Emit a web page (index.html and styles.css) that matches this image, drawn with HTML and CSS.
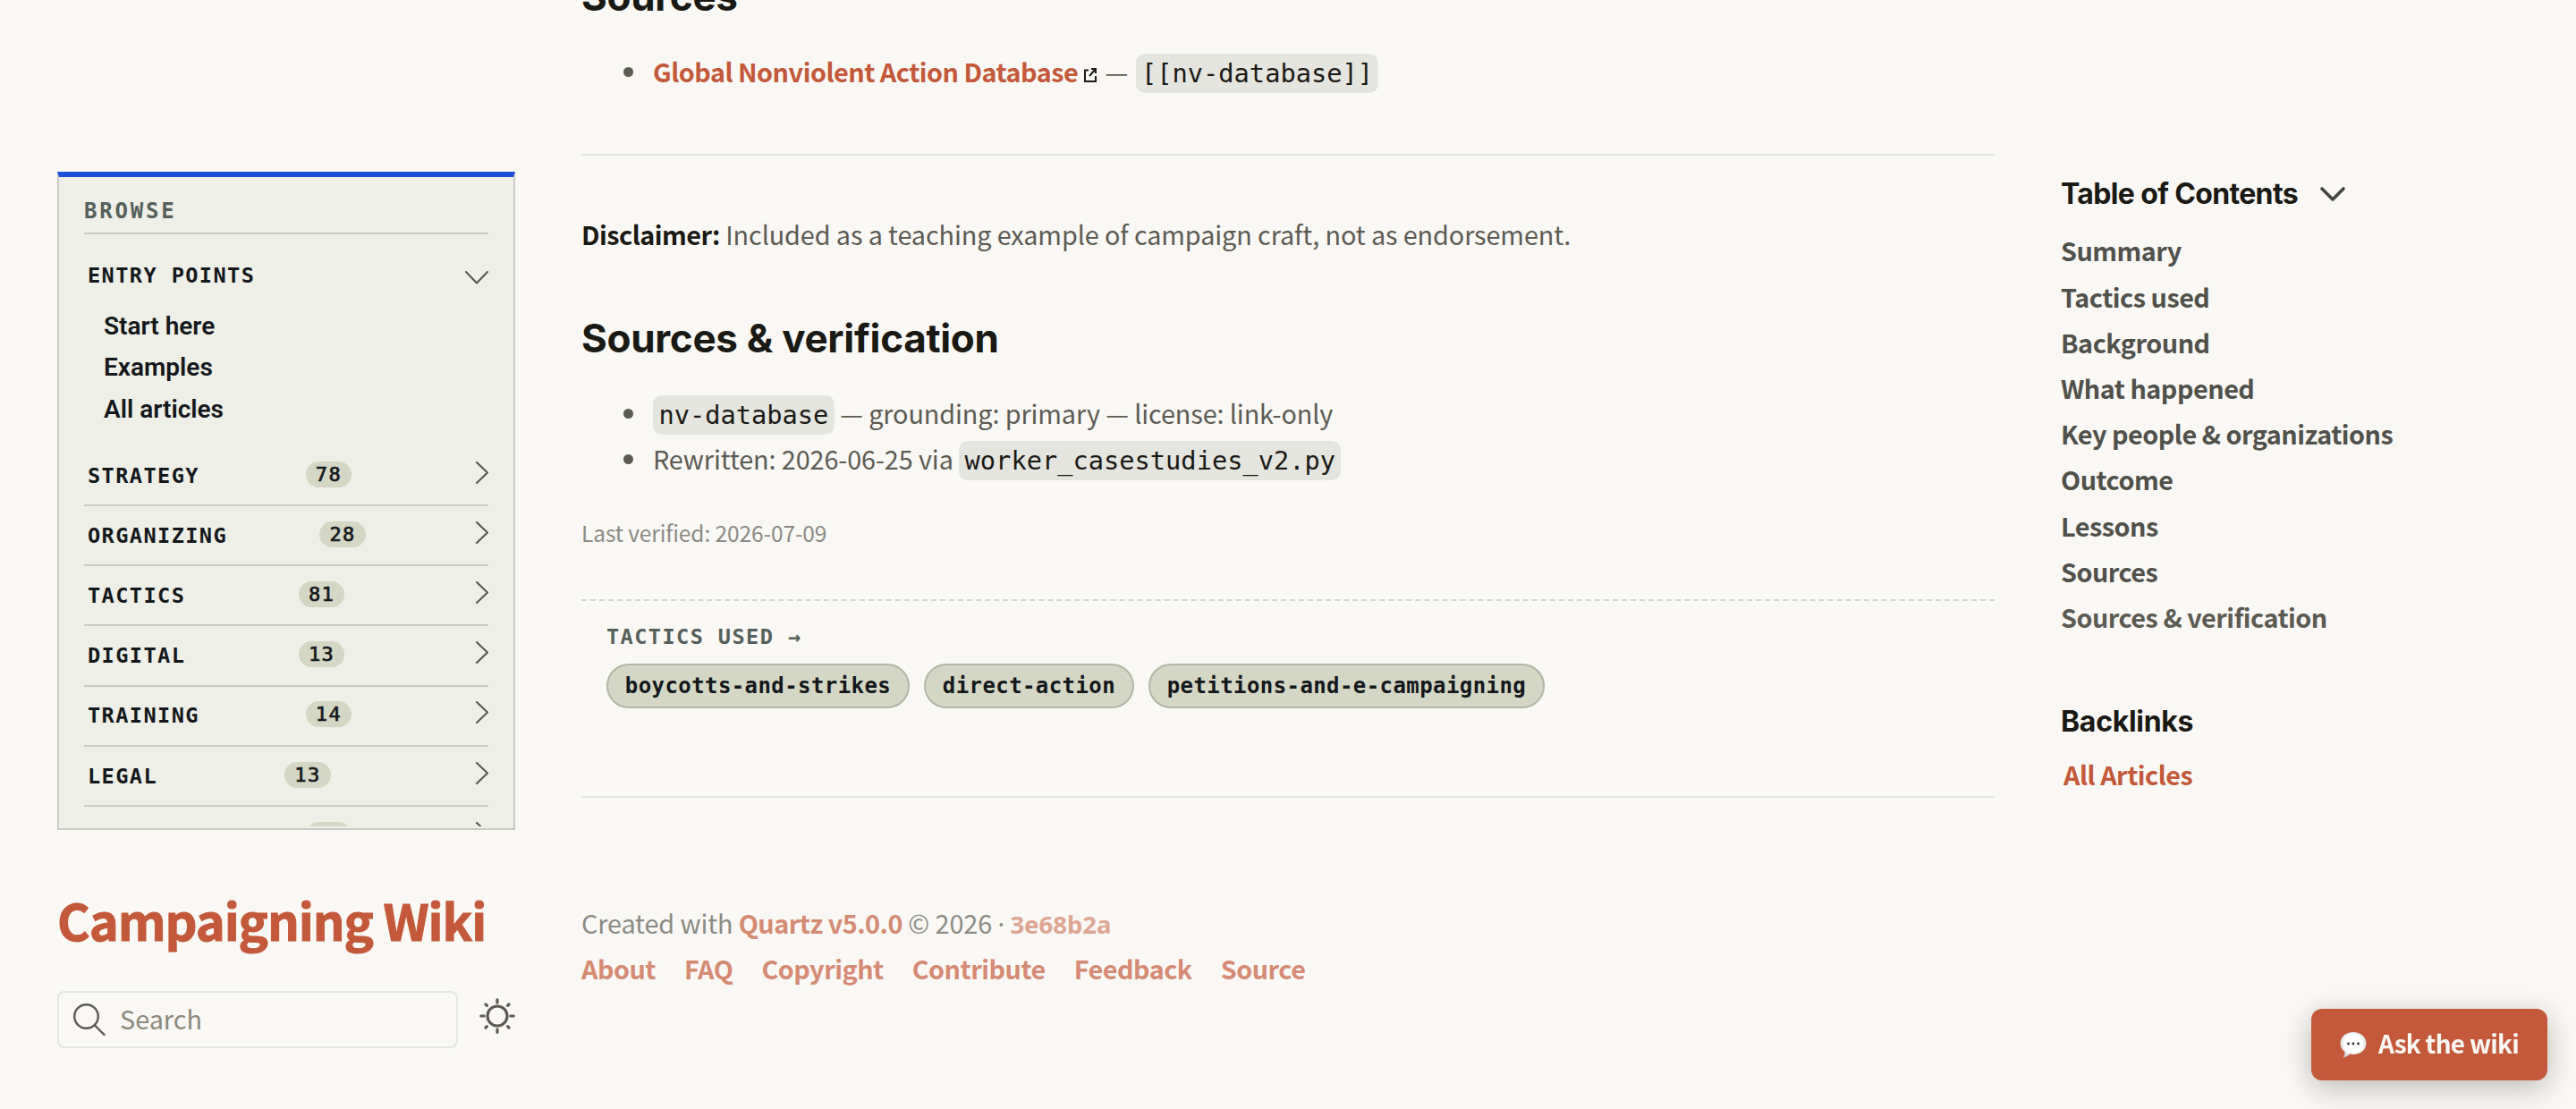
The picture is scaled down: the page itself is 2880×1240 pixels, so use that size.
FILE: index.html
```html
<!DOCTYPE html>
<html lang="en">
<head>
  <meta charset="UTF-8" />
  <title>Campaigning Wiki</title>
  <meta name="viewport" content="width=device-width, initial-scale=1.0" />
  <link rel="stylesheet" href="styles.css">
</head>
<body>
  <div class="page">
    <aside class="sidebar left">
      <nav class="browse">
        <div class="browse-scroll">
          <div class="browse-title">Browse</div>

          <div class="browse-head">
            <span>Entry points</span>
            <svg class="chevron-down" width="26" height="15" viewBox="0 0 26 15"><path d="M1 1 L13 13.5 L25 1" /></svg>
          </div>
          <ul class="browse-links">
            <li><a href="#">Start here</a></li>
            <li><a href="#">Examples</a></li>
            <li><a href="#">All articles</a></li>
          </ul>

          <div class="browse-row"><span>Strategy</span><span class="count">78</span><svg class="chevron" width="34" height="25" viewBox="0 0 34 25"><path d="M21 1 L33 12.5 L21 24" /></svg></div>
          <div class="browse-row"><span>Organizing</span><span class="count">28</span><svg class="chevron" width="34" height="25" viewBox="0 0 34 25"><path d="M21 1 L33 12.5 L21 24" /></svg></div>
          <div class="browse-row"><span>Tactics</span><span class="count">81</span><svg class="chevron" width="34" height="25" viewBox="0 0 34 25"><path d="M21 1 L33 12.5 L21 24" /></svg></div>
          <div class="browse-row"><span>Digital</span><span class="count">13</span><svg class="chevron" width="34" height="25" viewBox="0 0 34 25"><path d="M21 1 L33 12.5 L21 24" /></svg></div>
          <div class="browse-row"><span>Training</span><span class="count">14</span><svg class="chevron" width="34" height="25" viewBox="0 0 34 25"><path d="M21 1 L33 12.5 L21 24" /></svg></div>
          <div class="browse-row"><span>Legal</span><span class="count">13</span><svg class="chevron" width="34" height="25" viewBox="0 0 34 25"><path d="M21 1 L33 12.5 L21 24" /></svg></div>
          <div class="browse-row"><span>Security</span><span class="count">12</span><svg class="chevron" width="34" height="25" viewBox="0 0 34 25"><path d="M21 1 L33 12.5 L21 24" /></svg></div>
        </div>
      </nav>

      <h2 class="site-title"><a href="#">Campaigning Wiki</a></h2>

      <div class="tools">
        <button type="button" class="search">
          <svg width="36" height="36" viewBox="0 0 36 36"><circle cx="14.5" cy="14.5" r="13.3" /><path d="M24 24.5 L34.5 35" /></svg>
          <span>Search</span>
        </button>
        <button type="button" class="theme" aria-label="Toggle theme">
          <svg width="40" height="40" viewBox="0 0 40 40">
            <circle cx="20" cy="20" r="11" />
            <path d="M20 1.8V5.2M20 34.8V38.2M1.8 20H5.2M34.8 20H38.2M7 7L8.4 8.4M31.6 31.6L33 33M7 33L8.4 31.6M31.6 8.4L33 7" />
          </svg>
        </button>
      </div>
    </aside>

    <main class="center">
      <h2 class="first">Sources</h2>
      <ul>
        <li><a href="#" class="external">Global Nonviolent Action Database<svg class="external-icon" width="14" height="16" viewBox="0 0 14 16"><path d="M5 2.5H1V15H13V9M8 1H13V6M13 1L6 9" /></svg></a> — <code>[[nv-database]]</code></li>
      </ul>
      <hr>
      <p><strong>Disclaimer:</strong> Included as a teaching example of campaign craft, not as endorsement.</p>
      <h2>Sources &amp; verification</h2>
      <ul>
        <li><code>nv-database</code> — grounding: primary — license: link-only</li>
        <li>Rewritten: 2026-06-25 via <code>worker_casestudies_v2.py</code></li>
      </ul>
      <p class="verified">Last verified: 2026-07-09</p>

      <section class="related">
        <div class="related-label">Tactics used →</div>
        <div class="tags">
          <a href="#" class="tag">boycotts-and-strikes</a>
          <a href="#" class="tag">direct-action</a>
          <a href="#" class="tag">petitions-and-e-campaigning</a>
        </div>
      </section>

      <hr class="footer-rule">
      <footer>
        <p>Created with <a href="#">Quartz v5.0.0</a> © 2026 <span class="dot">·</span> <a href="#" class="hash">3e68b2a</a></p>
        <ul class="footer-links">
          <li><a href="#">About</a></li>
          <li><a href="#">FAQ</a></li>
          <li><a href="#">Copyright</a></li>
          <li><a href="#">Contribute</a></li>
          <li><a href="#">Feedback</a></li>
          <li><a href="#">Source</a></li>
        </ul>
      </footer>
    </main>

    <aside class="sidebar right">
      <h3 class="toc-title">Table of Contents
        <svg width="30" height="18" viewBox="0 0 30 18"><path d="M3 3 L15 15 L27 3" /></svg>
      </h3>
      <ul class="toc">
        <li><a href="#">Summary</a></li>
        <li><a href="#">Tactics used</a></li>
        <li><a href="#">Background</a></li>
        <li><a href="#">What happened</a></li>
        <li><a href="#">Key people &amp; organizations</a></li>
        <li><a href="#">Outcome</a></li>
        <li><a href="#">Lessons</a></li>
        <li><a href="#">Sources</a></li>
        <li><a href="#" class="last">Sources &amp; verification</a></li>
      </ul>
      <h3 class="backlinks-title">Backlinks</h3>
      <a href="#" class="backlink">All Articles</a>
    </aside>
  </div>

  <button type="button" class="ask">
    <svg width="30" height="31" viewBox="0 0 30 31">
      <defs>
        <radialGradient id="bubble" cx="50%" cy="45%" r="58%">
          <stop offset="0.6" stop-color="#ffffff" />
          <stop offset="1" stop-color="#c9c9c9" />
        </radialGradient>
      </defs>
      <path d="M15 1C23 1 29.500 6 29.500 13.500S23 26 15 26C13.500 26 12 25.800 11 25.500C8.500 28 6 29.500 3.500 29.800C5 28 5.500 25.500 5.300 23C2.500 20.700 0.500 17.500 0.500 13.500C0.500 6 7 1 15 1Z" fill="url(#bubble)" />
      <circle cx="9.500" cy="14" r="1.400" fill="#333" />
      <circle cx="15" cy="14" r="1.400" fill="#333" />
      <circle cx="20.500" cy="14" r="1.400" fill="#333" />
    </svg>
    <span>Ask the wiki</span>
  </button>
</body>
</html>
```
FILE: styles.css
```css
:root {
  --light: #f9f8f4;
  --lightgray: #e5e5df;
  --gray: #8b8b84;
  --darkgray: #5c5b53;
  --dark: #1a1914;
  --accent: #c3593a;
  --panel: #eeefe6;
  --panel-line: #c9cbc4;
  --ink: #14181c;
  --body-font: "Noto Sans CJK SC", "Noto Sans", sans-serif;
  --head-font: Inter, "Noto Sans", sans-serif;
  --mono-font: "DejaVu Sans Mono", "Liberation Mono", monospace;
}

body {
  margin: 0;
  height: 1240px;
  overflow: hidden;
  background-color: var(--light);
  color: var(--darkgray);
  font-family: var(--body-font);
  font-size: 28.8px;
  line-height: 51.2px;
  letter-spacing: -0.1px;
}

a {
  color: var(--accent);
  font-weight: 700;
  letter-spacing: -0.5px;
  text-decoration: none;
}

ul {
  margin: 0;
  padding: 0;
}

p {
  margin: 0;
}

button {
  font-family: inherit;
  cursor: pointer;
}

svg {
  flex: none;
  fill: none;
  stroke-linecap: round;
  stroke-linejoin: round;
}

.page {
  display: grid;
  grid-template-columns: 512px 1580px 512px;
  column-gap: 74px;
  padding-left: 64px;
}

/* left sidebar */
.left {
  padding-top: 192px;
}

.browse {
  box-sizing: border-box;
  height: 736px;
  background-color: var(--panel);
  border: 2px solid var(--panel-line);
  border-top: 6px solid #1d4fd8;
  color: var(--ink);
  font-family: var(--mono-font);
  font-size: 23.6px;
  font-weight: 700;
  line-height: 32px;
  letter-spacing: 1.4px;
}

.browse-scroll {
  box-sizing: border-box;
  height: 726px;
  padding: 21.6px 28px 0;
  overflow: hidden;
}

.browse-title {
  padding-bottom: 8.4px;
  border-bottom: 2px solid var(--panel-line);
  color: #55605a;
  font-size: 24px;
  letter-spacing: 2.8px;
  text-transform: uppercase;
}

.browse-head,
.browse-row {
  display: flex;
  justify-content: space-between;
  align-items: flex-start;
  padding-left: 4px;
  text-transform: uppercase;
}

.browse-head {
  height: 36px;
  margin-top: 29.6px;
}

.browse-head svg,
.browse-row svg {
  stroke: #55564f;
  stroke-width: 2;
}

.chevron-down {
  margin-top: 11px;
}

.browse-links {
  margin: 14px 0 16.8px 22px;
  list-style: none;
  font-family: Roboto, sans-serif;
  font-size: 28px;
  line-height: 46.8px;
  letter-spacing: 0;
}

.browse-links a {
  color: var(--ink);
  font-weight: 600;
  letter-spacing: 0;
}

.browse-row {
  height: 48.4px;
  padding-top: 16.8px;
  border-bottom: 2px solid var(--panel-line);
}

.count {
  padding: 0 11px;
  border-radius: 15px;
  background-color: #d4d7c4;
  font-size: 22px;
  font-weight: 400;
  line-height: 29px;
  -webkit-text-stroke: 0.7px currentColor;
}

.site-title {
  margin: 70px 0 0;
  font-size: 56px;
  line-height: 60px;
}

.site-title a {
  letter-spacing: -1.1px;
  -webkit-text-stroke: 1px currentColor;
}

.tools {
  display: flex;
  align-items: flex-start;
  gap: 24px;
  margin-top: 50px;
}

.search {
  display: flex;
  box-sizing: border-box;
  width: 448px;
  height: 64px;
  padding: 0 16px;
  align-items: center;
  gap: 16px;
  border: 2px solid var(--lightgray);
  border-radius: 8px;
  background: none;
  color: #8b897b;
  font-size: 28.8px;
}

.search span {
  padding-bottom: 4px;
}

.search svg {
  stroke: var(--darkgray);
  stroke-width: 2.4;
}

.theme {
  display: flex;
  padding: 8px 0 0;
  border: 0;
  background: none;
}

.theme svg {
  stroke: var(--darkgray);
  stroke-width: 3.2;
}

/* article */
h2,
h3 {
  color: var(--dark);
  font-family: var(--head-font);
  font-weight: 700;
}

.site-title {
  font-family: var(--body-font);
}

.center h2 {
  margin: 66px 0 32.8px;
  font-size: 44px;
  line-height: 50px;
  letter-spacing: -0.3px;
}

.center .first {
  margin: -29px 0 32.5px;
}

.center ul {
  padding-left: 76px;
}

.center ul li {
  padding-left: 4px;
}

code {
  padding: 5px 6.4px;
  border-radius: 10px;
  background-color: var(--lightgray);
  color: var(--dark);
  font-family: var(--mono-font);
  font-size: 28.7px;
  line-height: 1;
  letter-spacing: 0;
}

.external-icon {
  margin: 0 3px 0 7px;
  stroke: var(--dark);
  stroke-width: 2;
  stroke-linecap: butt;
  stroke-linejoin: miter;
}

.external + code {
  margin-left: 2px;
}

hr {
  height: 2px;
  margin: 67.3px 0 61.8px;
  border: 0;
  background-color: var(--lightgray);
}

strong {
  color: var(--dark);
  letter-spacing: -0.5px;
}

.verified {
  margin-top: 35.4px;
  color: var(--gray);
  font-size: 24.5px;
  line-height: 43.5px;
}

.related {
  margin-top: 53px;
  padding: 23.6px 28px 0;
  border-top: 2px dashed #d3d5cd;
}

.related-label {
  color: #55605a;
  font-family: var(--mono-font);
  font-size: 23.6px;
  font-weight: 700;
  line-height: 32px;
  letter-spacing: 1.4px;
  text-transform: uppercase;
}

.tags {
  display: flex;
  gap: 16px;
  margin-top: 14.4px;
}

.tag {
  padding: 0 18.8px;
  border: 2px solid #b2b6a4;
  border-radius: 25px;
  background-color: #d4d7c4;
  color: var(--ink);
  font-family: var(--mono-font);
  font-size: 24px;
  line-height: 46px;
  letter-spacing: 0.42px;
}

.footer-rule {
  margin: 98px 0 113.8px;
}

footer {
  color: var(--gray);
}

footer a {
  color: #d58b73;
}

footer .dot {
  font-family: "Noto Sans", sans-serif;
  line-height: 1;
}

footer .hash {
  color: #dfa693;
  font-family: "Noto Sans", sans-serif;
  font-size: 27.5px;
  line-height: 1;
  letter-spacing: 0;
}

.center .footer-links {
  display: flex;
  gap: 32px;
  padding: 0;
  list-style: none;
}

.center .footer-links li {
  padding: 0;
}

/* right sidebar */
.toc-title,
.backlinks-title {
  display: flex;
  align-items: center;
  gap: 24px;
  margin: 197.4px 0 17px;
  font-size: 32px;
  line-height: 40px;
  letter-spacing: -0.65px;
}

.toc-title svg {
  stroke: #45443e;
  stroke-width: 3.6;
}

.toc {
  list-style: none;
}

.toc a {
  color: #51514b;
}

.toc .last {
  color: var(--darkgray);
}

.backlinks-title {
  margin: 72px 0 13px;
  letter-spacing: -0.3px;
}

.backlink {
  margin-left: 3px;
}

.ask {
  position: fixed;
  right: 32px;
  bottom: 32px;
  display: flex;
  box-sizing: border-box;
  width: 264px;
  height: 80px;
  padding: 0 32px;
  align-items: center;
  gap: 13px;
  border: 0;
  border-radius: 12px;
  background-color: var(--accent);
  box-shadow: 0 8px 32px rgba(0, 0, 0, 0.25);
  color: var(--light);
  font-size: 28px;
  font-weight: 700;
  letter-spacing: -0.75px;
  white-space: nowrap;
}

.ask span {
  padding-bottom: 4px;
}
```
